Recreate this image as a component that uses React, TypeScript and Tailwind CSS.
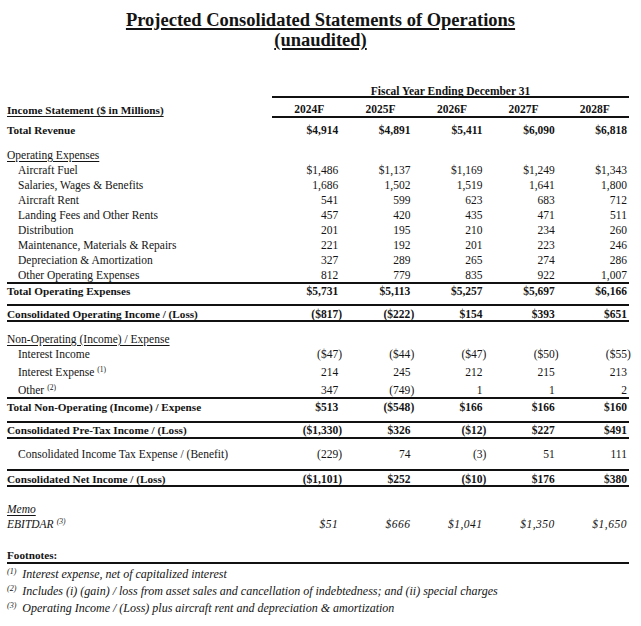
/**
 * Projected Consolidated Statements of Operations
 * Five-year forecast table (2024F–2028F), serif financial-report styling.
 */
import type { ReactNode } from 'react';
import clsx from 'clsx';

const YEARS = ['2024F', '2025F', '2026F', '2027F', '2028F'];

// Closing paren hangs past the column edge, like accounting alignment
function Num({ value }: { value: string }) {
  if (value.startsWith('(') && value.endsWith(')')) {
    return (
      <span>
        {value.slice(0, -1)}
        <span className="inline-block w-0">)</span>
      </span>
    );
  }
  return <span>{value}</span>;
}

function Sup({ n }: { n: number }) {
  return <sup className="ml-[3px] text-[7.5px]">({n})</sup>;
}

type RowProps = {
  label: ReactNode;
  values?: string[];
  className?: string;
  labelClassName?: string;
  valueClassName?: string;
};

function Row({ label, values, className, labelClassName, valueClassName }: RowProps) {
  return (
    <div className={clsx('grid grid-cols-[261px_repeat(5,72.2px)] items-center leading-[14px]', className)}>
      <div className={clsx('whitespace-nowrap', labelClassName)}>{label}</div>
      {values?.map((v, i) => (
        <div key={i} className={clsx('text-right pr-[2px] whitespace-nowrap', valueClassName)}>
          <Num value={v} />
        </div>
      ))}
    </div>
  );
}

const operatingExpenses: [string, string[]][] = [
  ['Aircraft Fuel', ['$1,486', '$1,137', '$1,169', '$1,249', '$1,343']],
  ['Salaries, Wages & Benefits', ['1,686', '1,502', '1,519', '1,641', '1,800']],
  ['Aircraft Rent', ['541', '599', '623', '683', '712']],
  ['Landing Fees and Other Rents', ['457', '420', '435', '471', '511']],
  ['Distribution', ['201', '195', '210', '234', '260']],
  ['Maintenance, Materials & Repairs', ['221', '192', '201', '223', '246']],
  ['Depreciation & Amortization', ['327', '289', '265', '274', '286']],
  ['Other Operating Expenses', ['812', '779', '835', '922', '1,007']],
];

// bold row labels run a touch narrower than the body text
const boldLabel = 'text-[11.2px]';

export default function App() {
  return (
    <div className="w-[641px] h-[626px] bg-white text-[#141414] font-['Liberation_Serif',serif] text-[11.5px] overflow-hidden">
      {/* Title */}
      <div className="pt-[10px] text-center text-[18.5px] leading-[20px] font-bold">
        <div>
          <span className="underline decoration-[1.5px] underline-offset-[2px]">
            Projected Consolidated Statements of Operations
          </span>
        </div>
        <div>
          <span className="underline decoration-[1.5px] underline-offset-[2px]">(unaudited)</span>
        </div>
      </div>

      <div className="ml-[7px] w-[622px] mt-[34px]">
        {/* Column header */}
        <div className="flex">
          <div className="w-[265px]" />
          <div className="w-[357px] h-[14px] leading-[14px] border-b-2 border-[#111] text-center font-bold">
            Fiscal Year Ending December 31
          </div>
        </div>
        <div className="flex">
          <div className={clsx('w-[265px] pt-[5px] leading-[14px] font-bold', boldLabel)}>
            <span className="underline underline-offset-[2px]">Income Statement ($ in Millions)</span>
          </div>
          <div className="w-[357px] h-[20px] border-b-2 border-[#111] grid grid-cols-5 pt-[4px] leading-[14px] font-bold">
            {YEARS.map(y => (
              <div key={y} className="text-center pl-[3px]">{y}</div>
            ))}
          </div>
        </div>

        <Row
          label="Total Revenue"
          values={['$4,914', '$4,891', '$5,411', '$6,090', '$6,818']}
          className="h-[24px] font-bold"
          labelClassName={boldLabel}
        />

        {/* Operating expenses */}
        <Row
          label={<span className="underline underline-offset-[2px]">Operating Expenses</span>}
          className="h-[15px] mt-[5px]"
        />
        {operatingExpenses.map(([label, values]) => (
          <Row key={label} label={label} values={values} className="h-[15px]" labelClassName="pl-[11px]" />
        ))}
        <div className="border-t-2 border-[#111]">
          <Row
            label="Total Operating Expenses"
            values={['$5,731', '$5,113', '$5,257', '$5,697', '$6,166']}
            className="h-[14px] font-bold"
            labelClassName={boldLabel}
          />
        </div>

        <div className="mt-[6px] border-y-2 border-[#111]">
          <Row
            label="Consolidated Operating Income / (Loss)"
            values={['($817)', '($222)', '$154', '$393', '$651']}
            className="h-[14px] pt-[1px] font-bold"
            labelClassName={boldLabel}
          />
        </div>

        {/* Non-operating */}
        <Row
          label={<span className="underline underline-offset-[2px]">Non-Operating (Income) / Expense</span>}
          className="h-[15px] mt-[9px]"
        />
        <Row
          label="Interest Income"
          values={['($47)', '($44)', '($47)', '($50)', '($55)']}
          className="h-[15px]"
          labelClassName="pl-[11px]"
        />
        <Row
          label={<>Interest Expense<Sup n={1} /></>}
          values={['214', '245', '212', '215', '213']}
          className="h-[19px] pt-[2px]"
          labelClassName="pl-[11px]"
        />
        <Row
          label={<>Other<Sup n={2} /></>}
          values={['347', '(749)', '1', '1', '2']}
          className="h-[17px] pt-[2px]"
          labelClassName="pl-[11px]"
        />
        <div className="border-t-2 border-[#111]">
          <Row
            label="Total Non-Operating (Income) / Expense"
            values={['$513', '($548)', '$166', '$166', '$160']}
            className="h-[16px] font-bold"
            labelClassName={boldLabel}
          />
        </div>

        <div className="mt-[6px] border-y-2 border-[#111]">
          <Row
            label="Consolidated Pre-Tax Income / (Loss)"
            values={['($1,330)', '$326', '($12)', '$227', '$491']}
            className="h-[14px] font-bold"
            labelClassName={boldLabel}
          />
        </div>
        <Row
          label="Consolidated Income Tax Expense / (Benefit)"
          values={['(229)', '74', '(3)', '51', '111']}
          className="h-[30px]"
          labelClassName="pl-[11px]"
        />
        <div className="border-y-2 border-[#111]">
          <Row
            label="Consolidated Net Income / (Loss)"
            values={['($1,101)', '$252', '($10)', '$176', '$380']}
            className="h-[14px] pt-[1px] font-bold"
            labelClassName={boldLabel}
          />
        </div>

        {/* Memo */}
        <Row
          label={<span className="underline underline-offset-[2px]">Memo</span>}
          className="h-[15px] mt-[14px] italic"
        />
        <Row
          label={<>EBITDAR<Sup n={3} /></>}
          values={['$51', '$666', '$1,041', '$1,350', '$1,650']}
          className="h-[15px] italic"
          valueClassName="tracking-[0.5px]"
        />

        {/* Footnotes */}
        <div className={clsx('mt-[15px] h-[18px] pt-[2px] leading-[14px] border-b-2 border-[#111] font-bold', boldLabel)}>
          Footnotes:
        </div>
        <div className="mt-[2px] italic text-[12px] leading-[17px]">
          <div className="h-[17px]">
            <sup className="text-[8px] mr-[6px]">(1)</sup>Interest expense, net of capitalized interest
          </div>
          <div className="h-[17px]">
            <sup className="text-[8px] mr-[6px]">(2)</sup>Includes (i) (gain) / loss from asset sales and cancellation of indebtedness; and (ii) special charges
          </div>
          <div className="h-[17px]">
            <sup className="text-[8px] mr-[6px]">(3)</sup>Operating Income / (Loss) plus aircraft rent and depreciation &amp; amortization
          </div>
        </div>
      </div>
    </div>
  );
}
